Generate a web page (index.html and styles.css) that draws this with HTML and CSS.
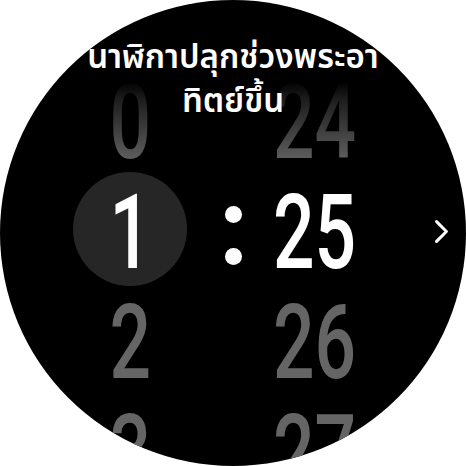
FILE: index.html
```html
<!DOCTYPE html>
<html>
<head>
<meta charset="utf-8">
<link rel="stylesheet" href="styles.css">
</head>
<body>
<div class="watch">
  <div class="picker">
    <div class="col hours">
      <div class="num"><span class="d fade">0</span></div>
      <div class="num sel"><span class="d">1</span></div>
      <div class="num"><span class="d">2</span></div>
      <div class="num"><span class="d">3</span></div>
    </div>
    <div class="colon"><span class="dot"></span><span class="dot"></span></div>
    <div class="col mins">
      <div class="num"><span class="d fade">24</span></div>
      <div class="num cur"><span class="d">25</span></div>
      <div class="num"><span class="d">26</span></div>
      <div class="num"><span class="d">27</span></div>
    </div>
    <svg class="chev" width="13" height="23" viewBox="0 0 13 23"><polyline points="1.6,1.6 11.4,11.5 1.6,21.4" fill="none" stroke="#fff" stroke-width="3" stroke-linecap="round" stroke-linejoin="round"/></svg>
  </div>
  <h1 class="title">นาฬิกาปลุกช่วงพระอา<br>ทิตย์ขึ้น</h1>
</div>
</body>
</html>
```
FILE: styles.css
```css
html, body {
  margin: 0;
  padding: 0;
  background: #fff;
}
.watch {
  position: relative;
  width: 466px;
  height: 466px;
  border-radius: 50%;
  background: #000;
  overflow: hidden;
}
.picker {
  display: flex;
  align-items: flex-start;
  padding-top: 68px;
  padding-left: 73px;
}
.col {
  width: 114px;
  display: flex;
  flex-direction: column;
}
.num {
  position: relative;
  height: 110px;
  line-height: 110px;
  text-align: center;
  font-family: Roboto, "Liberation Sans", sans-serif;
  font-weight: 500;
  font-size: 103px;
  color: #656565;
}
.d {
  display: inline-block;
  transform: scaleX(0.71);
}
.d.fade {
  background: linear-gradient(to bottom, #000 12%, #1c1c1c 28%, #606060 85%);
  -webkit-background-clip: text;
  background-clip: text;
  color: transparent;
}
.num.sel, .num.cur {
  color: #fff;
}
.num.sel {
  z-index: 0;
}
.num.sel::before {
  content: "";
  position: absolute;
  left: 0;
  top: -6px;
  width: 114px;
  height: 114px;
  border-radius: 50%;
  background: #262626;
  z-index: -1;
}
.colon {
  width: 20px;
  margin-left: 36px;
  margin-top: 138px;
  display: flex;
  flex-direction: column;
  align-items: center;
  gap: 25px;
}
.dot {
  width: 17px;
  height: 17px;
  border-radius: 50%;
  background: #fff;
}
.mins {
  margin-left: 13px;
}
.chev {
  margin-left: 65px;
  margin-top: 152px;
}
.title {
  position: absolute;
  top: 36px;
  left: 0;
  right: 0;
  margin: 0;
  text-align: center;
  color: #fff;
  font-family: "Noto Sans Thai", "Noto Sans", "Liberation Sans", sans-serif;
  font-weight: 600;
  font-size: 33px;
  line-height: 44px;
}
```
